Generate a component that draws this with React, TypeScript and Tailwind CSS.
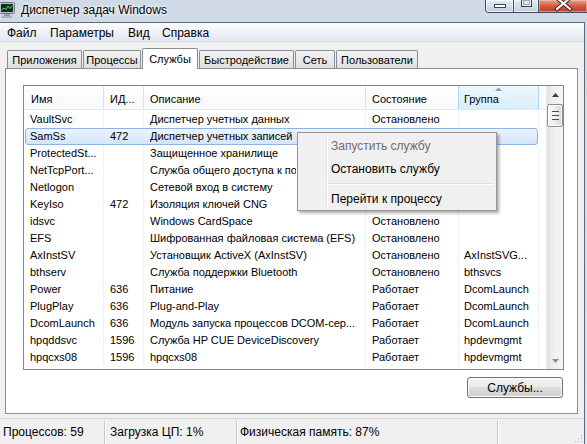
import React from "react";

const rows: string[][] = [
  ["VaultSvc", "", "Диспетчер учетных данных", "Остановлено", ""],
  ["SamSs", "472", "Диспетчер учетных записей безопасности", "", ""],
  ["ProtectedSt...", "", "Защищенное хранилище", "", ""],
  ["NetTcpPort...", "", "Служба общего доступа к портам Net.Tcp", "", ""],
  ["Netlogon", "", "Сетевой вход в систему", "", ""],
  ["KeyIso", "472", "Изоляция ключей CNG", "", ""],
  ["idsvc", "", "Windows CardSpace", "Остановлено", ""],
  ["EFS", "", "Шифрованная файловая система (EFS)", "Остановлено", ""],
  ["AxInstSV", "", "Установщик ActiveX (AxInstSV)", "Остановлено", "AxInstSVG..."],
  ["bthserv", "", "Служба поддержки Bluetooth", "Остановлено", "bthsvcs"],
  ["Power", "636", "Питание", "Работает", "DcomLaunch"],
  ["PlugPlay", "636", "Plug-and-Play", "Работает", "DcomLaunch"],
  ["DcomLaunch", "636", "Модуль запуска процессов DCOM-сер...", "Работает", "DcomLaunch"],
  ["hpqddsvc", "1596", "Служба HP CUE DeviceDiscovery", "Работает", "hpdevmgmt"],
  ["hpqcxs08", "1596", "hpqcxs08", "Работает", "hpdevmgmt"],
];

function TaskIcon() {
  return (
    <svg width="16" height="16" viewBox="0 0 16 16" className="-ml-[1px] shrink-0">
      <rect x="0.5" y="0.5" width="15" height="11" rx="1" fill="#dfe3e8" stroke="#6f7782" />
      <rect x="2" y="2" width="12" height="8" fill="#0d2b1c" stroke="#3a4a55" strokeWidth="0.5" />
      <polyline points="2.5,8 5,6 7,7.5 9,4 11,6.5 13.5,3.5" fill="none" stroke="#3fe05a" strokeWidth="1" />
      <rect x="5" y="12" width="6" height="2" fill="#9aa2ab" />
      <rect x="3" y="14" width="10" height="1.5" rx="0.5" fill="#c3c9d0" stroke="#7b838d" strokeWidth="0.5" />
    </svg>
  );
}

function CaptionButtons() {
  return (
    <div className="ml-auto flex h-[13px] rounded-bl-[4px] border-l border-b border-[#3f4c5c] overflow-hidden">
      <div className="relative w-[28px] border-r border-[#3f4c5c] bg-gradient-to-b from-[#e4ebf3] to-[#c2cfdd] shadow-[inset_0_0_0_1px_rgba(255,255,255,0.6)]">
        <svg width="28" height="12" className="absolute left-0 top-0">
          <rect x="8.5" y="4.5" width="11" height="3" fill="#ffffff" stroke="#39424d" />
        </svg>
      </div>
      <div className="relative w-[25px] border-r border-[#3f4c5c] bg-gradient-to-b from-[#e4ebf3] to-[#c2cfdd] shadow-[inset_0_0_0_1px_rgba(255,255,255,0.6)]">
        <svg width="25" height="12" className="absolute left-0 top-0">
          <rect x="7.5" y="-1.5" width="10" height="8" fill="none" stroke="#39424d" />
          <rect x="9" y="0" width="7" height="5" fill="none" stroke="#ffffff" />
          <rect x="9.5" y="0.5" width="6" height="4" fill="none" stroke="#6f7a88" strokeWidth="0.6" />
        </svg>
      </div>
      <div className="relative w-[48px] bg-gradient-to-b from-[#e6a08e] via-[#d05a41] to-[#c23c22] shadow-[inset_0_0_0_1px_rgba(255,210,200,0.5)]">
        <svg width="48" height="12" className="absolute left-0 top-0">
          <path d="M18 -2 L31 9 M31 -2 L18 9" stroke="#4a1a10" strokeWidth="4" strokeLinecap="square" />
          <path d="M18 -2 L31 9 M31 -2 L18 9" stroke="#ffffff" strokeWidth="2.2" strokeLinecap="square" />
        </svg>
      </div>
    </div>
  );
}

function Row({ r, selected, clip }: { r: string[]; selected?: boolean; clip?: boolean }) {
  const line = selected ? "border-transparent" : "border-[#edf2f8]";
  const sel = selected
    ? "before:absolute before:left-[1px] before:right-[8px] before:top-0 before:bottom-0 before:rounded-[3px] before:border before:border-[#8fb4e3] before:bg-gradient-to-b before:from-[#ecf4fe] before:to-[#d3e5fb]"
    : "";
  return (
    <div className={"relative flex h-[17px] leading-[17px] whitespace-nowrap " + sel}>
      <div className={"relative w-[80px] shrink-0 overflow-hidden pl-[6px] border-r " + line}>{r[0]}</div>
      <div className={"relative w-[40px] shrink-0 overflow-hidden pl-[6px] border-r " + line}>{r[1]}</div>
      <div className={"relative w-[222px] shrink-0 overflow-hidden pl-[6px] border-r " + line}>
        {clip ? <span className="inline-block max-w-[146px] overflow-hidden align-top">{r[2]}</span> : r[2]}
      </div>
      <div className="relative w-[92px] shrink-0 overflow-hidden pl-[6px]">{r[3]}</div>
      <div className={"relative w-[81px] shrink-0 overflow-hidden pl-[5px] border-x " + line}>{r[4]}</div>
    </div>
  );
}

function ScrollBar() {
  return (
    <div className="w-[17px] shrink-0 flex flex-col bg-gradient-to-r from-[#e3e3e3] via-[#f1f1f1] to-[#f5f5f5] border-l border-[#ececec]">
      <div className="h-[17px] flex items-center justify-center">
        <svg width="7" height="4" viewBox="0 0 7 4">
          <path d="M0 4 L3.5 0 L7 4 Z" fill="#3d3d3d" />
        </svg>
      </div>
      <div className="mt-[1px] h-[23px] rounded-[2px] border border-[#8e8f8f] bg-gradient-to-r from-[#f7f7f7] via-[#ececec] to-[#d6d6d6] shadow-[inset_0_0_0_1px_rgba(255,255,255,0.8)] flex flex-col items-center justify-center gap-[1px]">
        <div className="w-[7px] h-[1px] bg-[#4d4d4d]" />
        <div className="w-[7px] h-[1px] bg-[#f8f8f8]" />
        <div className="w-[7px] h-[1px] bg-[#4d4d4d]" />
        <div className="w-[7px] h-[1px] bg-[#f8f8f8]" />
        <div className="w-[7px] h-[1px] bg-[#4d4d4d]" />
      </div>
      <div className="flex-1" />
      <div className="h-[17px] flex items-center justify-center">
        <svg width="7" height="4" viewBox="0 0 7 4">
          <path d="M0 0 L3.5 4 L7 0 Z" fill="#8a8a8a" />
        </svg>
      </div>
    </div>
  );
}

function Tab({ label, w, active }: { label: string; w: string; active?: boolean }) {
  if (active) {
    return (
      <div className={"relative z-10 -mb-px h-[21px] flex items-center justify-center rounded-t-[2px] border border-b-0 border-[#898c95] bg-white " + w}>
        {label}
      </div>
    );
  }
  return (
    <div className={"h-[18px] flex items-center justify-center pt-[3px] rounded-t-[2px] border border-b-0 border-[#898c95] bg-gradient-to-b from-[#f4f4f4] to-[#dfdfdf] " + w}>
      <span className="-mt-[2px]">{label}</span>
    </div>
  );
}

export default function App() {
  return (
    <div className="relative w-[587px] h-[444px] overflow-hidden flex flex-col bg-gradient-to-b from-[#cfdae6] to-[#dde6ef] font-['Liberation_Sans',Arial,sans-serif] text-[12px] leading-none text-black">
      {/* Title bar */}
      <div className="h-[22px] shrink-0 flex items-start">
        <div className="flex items-center pt-[2px]">
          <TaskIcon />
          <span className="ml-[6px] [text-shadow:0_0_5px_#ffffff,0_0_3px_#ffffff]">Диспетчер задач Windows</span>
        </div>
        <CaptionButtons />
      </div>

      <div className="flex flex-1 min-h-0">
        <div className="w-[585px] shrink-0 flex flex-col border-t border-r border-[#5b6878] bg-[#f0f0f0]">
          {/* Menu bar */}
          <div className="h-[19px] shrink-0 flex items-center pl-[7px] pt-[2px] border-b border-[#d5dbe5] bg-gradient-to-b from-[#fcfdfe] to-[#e0e6f1]">
            <span className="w-[43px]">Файл</span>
            <span className="w-[78px]">Параметры</span>
            <span className="w-[34px]">Вид</span>
            <span>Справка</span>
          </div>

          {/* Content */}
          <div className="h-[376px] shrink-0 pt-[6px] pl-[5px] text-[11px]">
            <div className="h-[20px] flex items-end gap-[1px] pl-[2px]">
              <Tab label="Приложения" w="w-[75px]" />
              <Tab label="Процессы" w="w-[58px]" />
              <Tab label="Службы" w="w-[56px]" active />
              <Tab label="Быстродействие" w="w-[95px]" />
              <Tab label="Сеть" w="w-[40px]" />
              <Tab label="Пользователи" w="w-[82px]" />
            </div>
            <div className="w-[573px] h-[346px] border border-[#898c95] bg-white pt-[16px] pl-[17px]">
              {/* List view */}
              <div className="w-[541px] h-[285px] border border-[#828790] flex bg-white">
                <div className="w-[522px] shrink-0 flex flex-col">
                  <div className="flex h-[24px] border-b border-[#e5e6e8] bg-gradient-to-b from-white to-[#f7f8fa] whitespace-nowrap">
                    <div className="w-[80px] shrink-0 pl-[7px] pt-[8px] border-r border-[#dfe1e5]">Имя</div>
                    <div className="w-[40px] shrink-0 pl-[6px] pt-[8px] border-r border-[#dfe1e5]">ИД...</div>
                    <div className="w-[222px] shrink-0 pl-[6px] pt-[8px] border-r border-[#dfe1e5]">Описание</div>
                    <div className="w-[92px] shrink-0 pl-[6px] pt-[8px]">Состояние</div>
                    <div className="relative w-[81px] shrink-0 pl-[5px] pt-[8px] border-x border-[#a9d8f2] bg-gradient-to-b from-[#eef8fe] to-[#d8eefb]">
                      <svg width="7" height="4" viewBox="0 0 7 4" className="absolute left-[36px] top-[1px]">
                        <path d="M0 4 L3.5 0.5 L7 4 Z" fill="#7aa0c4" />
                      </svg>
                      Группа
                    </div>
                  </div>
                  <div className="h-[1px]" />
                  {rows.map((r, i) => (
                    <Row key={i} r={r} selected={i === 1} clip={i >= 1 && i <= 5} />
                  ))}
                </div>
                <ScrollBar />
              </div>
              <div className="mt-[7px] w-[540px] flex justify-end">
                <div className="w-[96px] h-[21px] rounded-[3px] border border-[#707070] bg-[linear-gradient(to_bottom,#f2f2f2_0%,#ebebeb_50%,#dddddd_50%,#cfcfcf_100%)] shadow-[inset_0_0_0_1px_#fbfbfb] flex justify-center pt-[4px] text-[12px]">
                  Службы...
                </div>
              </div>
            </div>
          </div>

          {/* Status bar */}
          <div className="h-[26px] shrink-0 flex items-stretch border-t border-[#d7d7d7] whitespace-nowrap">
            <div className="w-[104px] shrink-0 flex items-center pl-[3px] pt-[1px]">Процессов: 59</div>
            <div className="w-[2px] shrink-0 border-l border-[#c8c8c8] border-r border-r-white mt-[2px]" />
            <div className="w-[130px] shrink-0 flex items-center pl-[4px] pt-[1px]">Загрузка ЦП: 1%</div>
            <div className="w-[2px] shrink-0 border-l border-[#c8c8c8] border-r border-r-white mt-[2px]" />
            <div className="w-[259px] shrink-0 flex items-center pl-[2px] pt-[1px]">Физическая память: 87%</div>
            <div className="w-[2px] shrink-0 border-l border-[#c8c8c8] border-r border-r-white mt-[2px]" />
            <div className="flex-1 flex items-end justify-end pr-[1px] pb-[1px]">
              <svg width="9" height="9" viewBox="0 0 9 9">
                <rect x="7" y="1" width="1" height="1" fill="#b0b0b0" />
                <rect x="4" y="4" width="1" height="1" fill="#b0b0b0" />
                <rect x="7" y="4" width="1" height="1" fill="#b0b0b0" />
                <rect x="1" y="7" width="1" height="1" fill="#b0b0b0" />
                <rect x="4" y="7" width="1" height="1" fill="#b0b0b0" />
                <rect x="7" y="7" width="1" height="1" fill="#b0b0b0" />
              </svg>
            </div>
          </div>
        </div>
        <div className="flex-1" />
      </div>

      {/* Context menu */}
      <div className="absolute left-[297px] top-[132px] w-[200px] h-[79px] border border-[#979797] bg-[#f0f0f0] shadow-[2px_2px_3px_rgba(0,0,0,0.35)] pt-[1px] flex flex-col">
        <div className="absolute left-[28px] top-0 bottom-0 w-[2px] border-l border-[#e2e3e3] border-r border-r-white" />
        <div className="h-[23px] flex items-center pl-[33px] text-[#6d6d6d]">Запустить службу</div>
        <div className="h-[23px] flex items-center pl-[33px]">Остановить службу</div>
        <div className="h-[7px] flex flex-col justify-center pl-[30px] pr-[2px]">
          <div className="h-[1px] bg-[#e0e0e0]" />
          <div className="h-[1px] bg-white" />
        </div>
        <div className="h-[23px] flex items-center pl-[33px]">Перейти к процессу</div>
      </div>
    </div>
  );
}
